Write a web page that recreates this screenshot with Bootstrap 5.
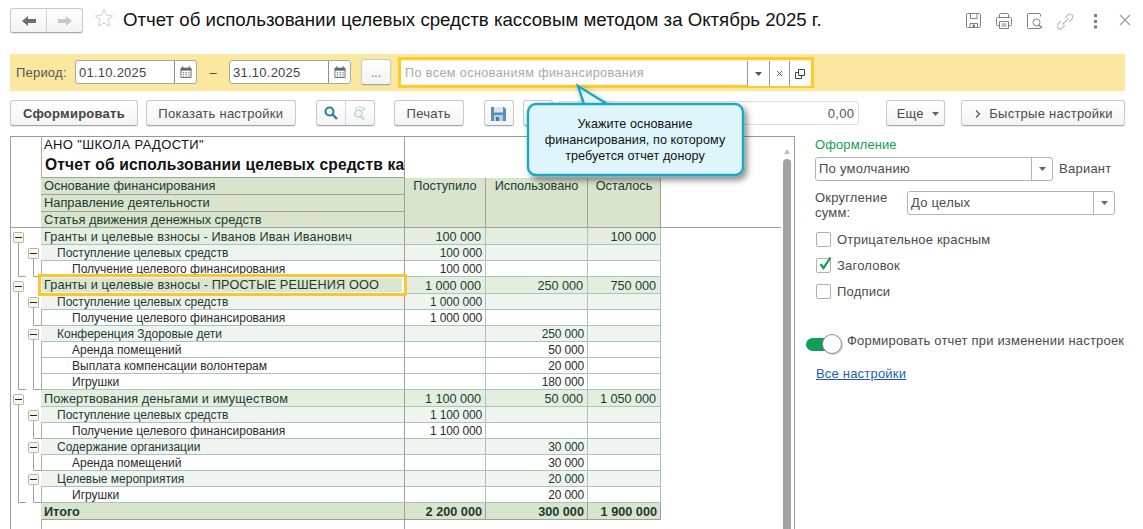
<!doctype html>
<html lang="ru">
<head>
<meta charset="utf-8">
<title>Отчет</title>
<link href="https://cdn.jsdelivr.net/npm/bootstrap@5.3.0/dist/css/bootstrap.min.css" rel="stylesheet">
<style>
html,body{height:529px;overflow:hidden;background:#fff}
body{position:relative;width:1143px;font-family:"Liberation Sans",Arial,sans-serif;font-size:13px;color:#4b4b4b;line-height:1.2}
.ui-btn{display:inline-flex;align-items:center;justify-content:center;height:26px;padding:2px 0 0;font-size:13px;color:#4b4b4b;background:linear-gradient(#fff,#f3f3f3);border:1px solid #c9c9c9;border-bottom-color:#a5a5a5;border-radius:3px;box-shadow:0 1px 1px rgba(0,0,0,.08);letter-spacing:.25px}
.hdr{height:54px;padding:8px 0 0 10px}
.nav-pair{width:73px;height:25px;padding:0}
.nav-pair span{flex:1;display:flex;align-items:center;justify-content:center;height:100%}
.nav-pair span+span{border-left:1px solid #d0d0d0}
.star-ico{margin-left:12px}
.page-title{margin:0 0 0 10px;font-size:18.67px;font-weight:400;color:#111;line-height:24px;white-space:nowrap}
.hdr-tools{position:absolute;top:13px;left:966px}
.hdr-tools svg{display:block}
.filter-bar{margin-left:10px;width:1115px;height:37px;background:#fbe8a0;padding:3px 0 0 6px}
.per-label{width:59px;color:#555;letter-spacing:.2px;line-height:32px}
.date-box{width:122px;height:24px;background:#fff;border:1px solid #a8a8a8;border-radius:3px;display:flex;margin-top:3px}
.date-box b{flex:1;font-weight:400;padding-left:3px;line-height:24px;color:#444;letter-spacing:.25px;font-size:13px}
.date-box i{width:22px;border-left:1px solid #8f8f8f;display:flex;align-items:center;justify-content:center}
.dash-sep{width:32px;text-align:center;color:#444;line-height:32px}
.more-btn{width:30px;height:26px;margin:2px 7px 0 10px;color:#666;font-size:12px;letter-spacing:0}
.basis-frame{width:416px;height:31px;border:3px solid #fdcb2e;background:#fff8dc;padding:1px;display:flex;box-sizing:border-box}
.basis-input{flex:1;background:#fff;color:#a9a9a9;padding-left:3px;line-height:25px;letter-spacing:.41px;font-size:12.6px}
.basis-act{background:#fff;border-left:1px solid #999;display:flex;align-items:center;justify-content:center;height:25px}
.w-a{width:22px}.w-b{width:20px}.w-c{width:21px}
.tool-row{margin:9px 0 0 10px;height:26px;width:1115px}
.w138{width:128px;font-weight:700;color:#454545}.w150{width:150px;margin-left:8px}
.pair-search{margin-left:20px;width:59px;padding:0}.pair-search span{flex:1;height:100%;display:flex;align-items:center;justify-content:center}
.pair-search span+span{border-left:1px solid #d6d6d6}
.w70{width:70px;margin-left:19px}.w30a{width:30px;margin-left:20px;padding:0}.w30b{width:30px;margin-left:9px}
.sum-box{width:302px;margin-left:5px;height:24px;margin-top:1px;border:1px solid #ddd;border-radius:3px;text-align:right;padding-right:4px;line-height:24px;color:#555;letter-spacing:.3px}
.w59{width:59px;margin-left:27px;padding-left:4px}.w164{width:164px;margin-left:16px;padding-left:2px}
.work-area{margin:10px 0 0 10px;height:393px}
.report-frame{width:785px;height:393px;border:1px solid #a0a0a0;border-bottom:0;position:relative;overflow:hidden;flex:none;border-top-color:#999}
.thumb{position:absolute;left:772px;top:22px;width:8px;height:380px;background:#a3a3a3;border-radius:4px 4px 0 0}
.thumb-up{position:absolute;left:773px;top:9px;width:0;height:0;border:3px solid transparent;border-bottom:5px solid #bdbdbd}
.rep-tbl{table-layout:fixed;border-collapse:separate;border-spacing:0;width:770px;color:#1c3a32}
.rep-tbl td,.rep-tbl th{padding:0;font-weight:400;overflow:hidden;white-space:nowrap;line-height:15px;vertical-align:middle}
.c1{width:30px}.c2{width:363px}.c3{width:81px}.c4{width:102px}.c5{width:73px}
.gut{vertical-align:top!important}
.gut svg{display:block}
.gut-head{border-bottom:1px solid #a0a0a0}
.rep-tbl .title-cell{height:41px;border-left:1px solid #b2aaa0;vertical-align:top;border-bottom:1px solid #a0a0a0;background:#fff;color:#111}
.org{font-size:13px;line-height:15px;padding:0 0 0 2px;letter-spacing:.36px}
.rep-name{font-size:15.6px;line-height:19px;font-weight:700;padding:3px 0 0 3px;letter-spacing:.16px}
.vl{border-left:1px solid #a0a0a0}
.rep-tbl .hd-lbl{background:#d8e4cc;height:17px;padding:0 0 1px 3px;font-size:12.85px;border-bottom:1px solid #a0a0a0}
.rep-tbl .hd-last{height:16px;padding:1px 0 0 3px;line-height:14px}
.rep-tbl .hd-num{background:#d8e4cc;vertical-align:top;text-align:center;border-bottom:1px solid #a0a0a0;border-left:1px solid #a0a0a0;font-size:12.7px;line-height:14px;padding-top:1px}
.hd-rest{border-left:1px solid #a0a0a0;border-bottom:1px solid #a0a0a0}
.r td{height:16px;border-bottom:1px solid #a9c4b8;font-size:12px;line-height:14px}
.r td:last-child{border-bottom:0;border-left:1px solid #a9c4b8}
.r .n{text-align:right;padding-right:3px;border-left:1px solid #a9c4b8;letter-spacing:-.15px}
.r .n.first{border-left-color:#a0a0a0}
.g1 td{height:17px;background:#e4eedf;font-size:12.7px;padding-top:2px}
.rep-tbl .r .gut{padding-top:0;border-bottom:0;background:#fff}
.g1 td:last-child,.g2 td:last-child,.g0 td:last-child{background:#fff}
.g1 .n{padding-right:4px;letter-spacing:-.05px}
.g1 .l{padding-left:3px;letter-spacing:.13px}
.g2 td{background:#eff4ee}
.g2 .l{padding-left:16px}
.g3 .l{padding-left:30px;border-left:1px solid #b2aaa0;color:#2b2b2b}
.g3 .n{color:#2b2b2b}
.g0 td{height:17px;background:#d8e4cc;font-size:12.7px;border-bottom:1px solid #a0a0a0;padding-top:2px}
.rep-tbl .g0 td{font-weight:700}
.g0 .l{padding-left:3px}
.g0 .n{padding-right:3px;border-left-color:#a0a0a0;letter-spacing:0}
.g0 td:last-child{border-bottom:0;border-left:1px solid #a0a0a0}
.tail-row td{height:12px}
.tail-row .l{border-left:1px solid #b2aaa0}
.side{padding:2px 0 0 20px;width:330px;color:#4b4b4b}
.side-head{color:#1a9a52;line-height:14px;margin-bottom:5px;letter-spacing:.1px}
.drop-box{height:24px;border:1px solid #b4b4b4;border-radius:3px;display:flex;background:#fff;color:#4b4b4b;letter-spacing:.25px}
.drop-box b{flex:1;font-weight:400;padding-left:3px;line-height:22px}
.drop-box i{width:21px;border-left:1px solid #b4b4b4;display:flex;align-items:center;justify-content:center}
.w238{width:238px}.w208{width:208px}
.var-lbl{margin-left:6px;letter-spacing:.25px}
.round-row{margin-top:10px}
.lbl2{width:92px;line-height:15px;letter-spacing:.2px;margin-top:-1px}
.chk-row{height:15px;margin-top:11px;gap:6px;line-height:15px;letter-spacing:.2px}
.chk-first{margin-top:12px}
.chk{width:15px;height:15px;border:1px solid #b0b0b0;border-radius:2px;background:#fff;position:relative;flex:none;margin-left:1px}
.chk svg{position:absolute;left:1px;top:-3px}
.tog-row{margin:35px 0 0 -9px;gap:5px;height:21px;line-height:14px;letter-spacing:.19px;white-space:nowrap}
.tog{width:36px;height:21px;position:relative;flex:none}
.tog::before{content:"";position:absolute;left:0;top:4px;width:30px;height:13px;border-radius:7px;background:#0f9d58}
.tog::after{content:"";position:absolute;left:16px;top:0;width:20px;height:20px;border-radius:50%;background:#fff;border:1px solid #8e8e8e;box-shadow:1px 1px 1px rgba(0,0,0,.2)}
.all-link{display:inline-block;margin:11px 0 0 1px;color:#1a5fb4;letter-spacing:.2px}
.callout{position:absolute;left:520px;top:80px;width:240px;height:108px}
.callout svg{position:absolute;left:0;top:0}
.callout p{position:absolute;left:7px;top:36px;width:216px;margin:0;text-align:center;font-size:12.6px;line-height:16px;color:#111;letter-spacing:.08px}
.hl-row{position:absolute;left:38px;top:274px;width:369px;height:22px;border:3px solid #fdc52c;background:#fff;padding:1px 2px 1px 0;color:#1c3a32;font-size:12.7px;line-height:15px;letter-spacing:.14px}
.hl-row span{display:block;height:100%;background:#dbe5cf;padding-left:2px;white-space:nowrap;border-left:1px solid #fff}
</style>
</head>
<body>
<div class="hdr d-flex align-items-start">
  <div class="ui-btn nav-pair d-flex">
    <span><svg width="16" height="12" viewBox="0 0 16 12"><path d="M7 1 1 6l6 5V8h8V4H7z" fill="#6e6e6e"/></svg></span>
    <span><svg width="16" height="12" viewBox="0 0 16 12"><path d="M9 1l6 5-6 5V8H1V4h8z" fill="#c9c9c9"/></svg></span>
  </div>
  <svg class="star-ico" width="18" height="20" viewBox="1 0 18 20"><path d="M10 1.500l2.500 5.600 6.100.6-4.600 4.100 1.300 6L10 14.700l-5.300 3.100 1.300-6-4.600-4.100 6.100-.6z" fill="none" stroke="#d8d8d8" stroke-width="1.200"/></svg>
  <h1 class="page-title">Отчет об использовании целевых средств кассовым методом за Октябрь 2025 г.</h1>
  <div class="hdr-tools d-flex">
    <svg width="30" height="16" viewBox="0 0 30 16"><g fill="none" stroke="#808080"><path d="M.5 1.500a1 1 0 0 1 1-1h12l1 1v12a1 1 0 0 1-1 1h-12a1 1 0 0 1-1-1z"/><path d="M4.500.5v5h6.500v-5M4 14.500v-4h7.500v4"/></g><rect x="6.500" y="11.500" width="2.500" height="2.500" fill="#808080"/></svg>
    <svg width="31" height="17" viewBox="0 0 31 17"><g fill="none" stroke="#808080"><path d="M3.500 4.500v-3a1 1 0 0 1 1-1h7a1 1 0 0 1 1 1v3M3 12.500H1.500a1 1 0 0 1-1-1v-6a1 1 0 0 1 1-1h13a1 1 0 0 1 1 1v6a1 1 0 0 1-1 1H13"/><path d="M3.500 8.500h9v7h-9zM5.500 11h5M5.500 13h5"/></g></svg>
    <svg width="30" height="17" viewBox="0 0 30 17"><g fill="none" stroke="#808080"><path d="M13.500 15.500h-12a1 1 0 0 1-1-1v-13a1 1 0 0 1 1-1h11a1 1 0 0 1 1 1v2"/><circle cx="9.500" cy="9.500" r="3.500"/><path d="M12 12l3 3" stroke-width="1.500"/></g></svg>
    <svg width="37" height="17" viewBox="0 0 37 17"><g fill="none" stroke="#bdbdbd" stroke-width="1.100"><path d="M8 5 11 2a2.800 2.800 0 0 1 4 4L12 9"/><path d="M8 12 5 15A2.800 2.800 0 0 1 1 11L4 8"/><path d="M5.500 11.500l6-6"/></g></svg>
    <svg width="25" height="17" viewBox="0 0 25 17"><g fill="#7d7d7d"><rect x="0" y="1" width="3" height="3"/><rect x="0" y="7" width="3" height="3"/><rect x="0" y="12.500" width="3" height="3"/></g></svg>
    <svg width="13" height="14" viewBox="0 0 13 14"><path d="M1 2l10 10M11 2 1 12" stroke="#9a9a9a" stroke-width="1.100" fill="none"/></svg>
  </div>
</div>

<div class="filter-bar d-flex align-items-start">
  <div class="per-label">Период:</div>
  <div class="date-box"><b>01.10.2025</b><i><svg width="12" height="12" viewBox="0 0 13 13"><path d="M1 2.500h11v10H1z" fill="#fff" stroke="#666"/><path d="M1 2h11v3H1z" fill="#666"/><path d="M3 0v3M10 0v3" stroke="#666"/><path d="M3 7h1.500M6 7h1.500M9 7h1.500M3 9h1.500M6 9h1.500M9 9h1.500M3 11h1.500M6 11h1.500M9 11h1.500" stroke="#777"/></svg></i></div>
  <div class="dash-sep">–</div>
  <div class="date-box"><b>31.10.2025</b><i><svg width="12" height="12" viewBox="0 0 13 13"><path d="M1 2.500h11v10H1z" fill="#fff" stroke="#666"/><path d="M1 2h11v3H1z" fill="#666"/><path d="M3 0v3M10 0v3" stroke="#666"/><path d="M3 7h1.500M6 7h1.500M9 7h1.500M3 9h1.500M6 9h1.500M9 9h1.500M3 11h1.500M6 11h1.500M9 11h1.500" stroke="#777"/></svg></i></div>
  <button type="button" class="ui-btn more-btn">...</button>
  <div class="basis-frame">
    <div class="basis-input">По всем основаниям финансирования</div>
    <div class="basis-act w-a"><svg width="7" height="4" viewBox="0 0 7 4"><path d="M0 0h7L3.500 4z" fill="#555"/></svg></div>
    <div class="basis-act w-b"><svg width="7" height="7" viewBox="0 0 7 7"><path d="M1 1l5 5M6 1 1 6" stroke="#666" fill="none"/></svg></div>
    <div class="basis-act w-c"><svg width="10" height="10" viewBox="0 0 10 10"><path d="M3.500.5h6v6h-6z M3 3.500H.5v6h6V7" fill="none" stroke="#444"/></svg></div>
  </div>
</div>

<div class="tool-row d-flex">
  <button type="button" class="ui-btn w138">Сформировать</button>
  <button type="button" class="ui-btn w150">Показать настройки</button>
  <div class="ui-btn pair-search">
    <span><svg width="14" height="14" viewBox="0 0 14 14"><circle cx="5.500" cy="5.500" r="4" fill="none" stroke="#2f7ca8" stroke-width="2"/><path d="M8.500 8.500l4.500 4.500" stroke="#2f7ca8" stroke-width="2.400"/></svg></span>
    <span><svg width="14" height="14" viewBox="0 0 14 14"><circle cx="5.500" cy="7.500" r="3.500" fill="none" stroke="#bcd3df" stroke-width="1.500"/><path d="M8 10.500l3 3" stroke="#bcd3df" stroke-width="1.800"/><path d="M2 3C5 .5 9 .5 11 3M11.500 1v3h-3" fill="none" stroke="#bcd3df"/></svg></span>
  </div>
  <button type="button" class="ui-btn w70">Печать</button>
  <button type="button" class="ui-btn w30a"><svg width="15" height="15" viewBox="0 0 15 15"><path d="M0 1h13l2 2v12H0z" fill="#5a8fb8"/><rect x="3" y="1" width="9" height="5.500" fill="#d8e6f0"/><rect x="3" y="9" width="9" height="6" fill="#b8cfdf"/><rect x="5" y="11" width="3" height="4" fill="#4a7aa0"/></svg></button>
  <button type="button" class="ui-btn w30b" aria-label="Меню"></button>
  <div class="sum-box">0,00</div>
  <button type="button" class="ui-btn w59">Еще&nbsp;<svg class="ms-1" width="7" height="4" viewBox="0 0 7 4"><path d="M0 0h7L3.500 4z" fill="#666"/></svg></button>
  <button type="button" class="ui-btn w164"><svg class="me-2" width="6" height="8" viewBox="0 0 6 8"><path d="M1 .5 4.500 4 1 7.500" fill="none" stroke="#555" stroke-width="1.200"/></svg>Быстрые настройки</button>
</div>

<div class="work-area d-flex">
  <div class="report-frame">
    <table class="rep-tbl">
      <colgroup><col class="c1"><col class="c2"><col class="c3"><col class="c4"><col class="c5"><col></colgroup>
      <tr>
        <td class="gut gut-head" rowspan="4"></td>
        <td class="title-cell"><div class="org">АНО "ШКОЛА РАДОСТИ"</div><div class="rep-name">Отчет об использовании целевых средств ка</div></td>
        <td colspan="4" class="vl"></td>
      </tr>
      <tr>
        <td class="hd-lbl">Основание финансирования</td>
        <td class="hd-num" rowspan="3">Поступило</td><td class="hd-num" rowspan="3">Использовано</td><td class="hd-num" rowspan="3">Осталось</td><td class="hd-rest" rowspan="3"></td>
      </tr>
      <tr><td class="hd-lbl">Направление деятельности</td></tr>
      <tr><td class="hd-lbl hd-last">Статья движения денежных средств</td></tr>
      <tr class="r g1"><td class="gut" rowspan="18"><svg width="30" height="292" viewBox="11 228 30 292" aria-hidden="true">
        <g fill="none" stroke="#a0a0a0">
          <path d="M18.500 240V276.500H26M18.500 289V389.500H26M18.500 402V502.500H26"/>
          <path d="M33.500 256V276.500H41M33.500 305V325.500H41M33.500 337V389.500H41M33.500 418V438.500H41M33.500 450V470.500H41M33.500 482V502.500H41"/>
        </g>
        <g fill="#f8f8ea" stroke="#b5b5a8">
          <rect x="13.500" y="232.500" width="10" height="10" rx="1"/><rect x="13.500" y="281.500" width="10" height="10" rx="1"/><rect x="13.500" y="394.500" width="10" height="10" rx="1"/>
          <rect x="28.500" y="248.500" width="10" height="10" rx="1"/><rect x="28.500" y="297.500" width="10" height="10" rx="1"/><rect x="28.500" y="329.500" width="10" height="10" rx="1"/><rect x="28.500" y="410.500" width="10" height="10" rx="1"/><rect x="28.500" y="442.500" width="10" height="10" rx="1"/><rect x="28.500" y="474.500" width="10" height="10" rx="1"/>
        </g>
        <path d="M15 237.500h7M15 286.500h7M15 399.500h7M30 253.500h7M30 302.500h7M30 334.500h7M30 415.500h7M30 447.500h7M30 479.500h7" stroke="#222"/>
      </svg></td><td class="l">Гранты и целевые взносы - Иванов Иван Иванович</td><td class="n first">100 000</td><td class="n"></td><td class="n">100 000</td><td></td></tr>
      <tr class="r g2"><td class="l">Поступление целевых средств</td><td class="n first">100 000</td><td class="n"></td><td class="n"></td><td></td></tr>
      <tr class="r g3"><td class="l">Получение целевого финансирования</td><td class="n first">100 000</td><td class="n"></td><td class="n"></td><td></td></tr>
      <tr class="r g1"><td class="l">Гранты и целевые взносы - ПРОСТЫЕ РЕШЕНИЯ ООО</td><td class="n first">1 000 000</td><td class="n">250 000</td><td class="n">750 000</td><td></td></tr>
      <tr class="r g2"><td class="l">Поступление целевых средств</td><td class="n first">1 000 000</td><td class="n"></td><td class="n"></td><td></td></tr>
      <tr class="r g3"><td class="l">Получение целевого финансирования</td><td class="n first">1 000 000</td><td class="n"></td><td class="n"></td><td></td></tr>
      <tr class="r g2"><td class="l">Конференция Здоровые дети</td><td class="n first"></td><td class="n">250 000</td><td class="n"></td><td></td></tr>
      <tr class="r g3"><td class="l">Аренда помещений</td><td class="n first"></td><td class="n">50 000</td><td class="n"></td><td></td></tr>
      <tr class="r g3"><td class="l">Выплата компенсации волонтерам</td><td class="n first"></td><td class="n">20 000</td><td class="n"></td><td></td></tr>
      <tr class="r g3"><td class="l">Игрушки</td><td class="n first"></td><td class="n">180 000</td><td class="n"></td><td></td></tr>
      <tr class="r g1"><td class="l">Пожертвования деньгами и имуществом</td><td class="n first">1 100 000</td><td class="n">50 000</td><td class="n">1 050 000</td><td></td></tr>
      <tr class="r g2"><td class="l">Поступление целевых средств</td><td class="n first">1 100 000</td><td class="n"></td><td class="n"></td><td></td></tr>
      <tr class="r g3"><td class="l">Получение целевого финансирования</td><td class="n first">1 100 000</td><td class="n"></td><td class="n"></td><td></td></tr>
      <tr class="r g2"><td class="l">Содержание организации</td><td class="n first"></td><td class="n">30 000</td><td class="n"></td><td></td></tr>
      <tr class="r g3"><td class="l">Аренда помещений</td><td class="n first"></td><td class="n">30 000</td><td class="n"></td><td></td></tr>
      <tr class="r g2"><td class="l">Целевые мероприятия</td><td class="n first"></td><td class="n">20 000</td><td class="n"></td><td></td></tr>
      <tr class="r g3"><td class="l">Игрушки</td><td class="n first"></td><td class="n">20 000</td><td class="n"></td><td></td></tr>
      <tr class="r g0"><td class="l">Итого</td><td class="n first">2 200 000</td><td class="n">300 000</td><td class="n">1 900 000</td><td></td></tr>
      <tr class="tail-row"><td></td><td class="l"></td><td class="vl"></td><td colspan="3"></td></tr>
    </table>
    <div class="thumb-up"></div>
    <div class="thumb"></div>
  </div>
  <aside class="side">
    <div class="side-head">Оформление</div>
    <div class="d-flex align-items-center">
      <div class="drop-box w238"><b>По умолчанию</b><i><svg width="7" height="4" viewBox="0 0 7 4"><path d="M0 0h7L3.500 4z" fill="#666"/></svg></i></div>
      <span class="var-lbl">Вариант</span>
    </div>
    <div class="d-flex round-row">
      <div class="lbl2">Округление сумм:</div>
      <div class="drop-box w208"><b>До целых</b><i><svg width="7" height="4" viewBox="0 0 7 4"><path d="M0 0h7L3.500 4z" fill="#666"/></svg></i></div>
    </div>
    <div class="chk-row chk-first d-flex"><span class="chk"></span>Отрицательное красным</div>
    <div class="chk-row d-flex"><span class="chk"><svg width="15" height="15" viewBox="0 0 15 15"><path d="M2.500 8l3 4L12.500 1.500" fill="none" stroke="#0f9d58" stroke-width="2.200"/></svg></span>Заголовок</div>
    <div class="chk-row d-flex"><span class="chk"></span>Подписи</div>
    <div class="tog-row d-flex"><span class="tog"></span>Формировать отчет при изменении настроек</div>
    <a class="all-link" href="#">Все настройки</a>
  </aside>
</div>

<div class="hl-row"><span>Гранты и целевые взносы - ПРОСТЫЕ РЕШЕНИЯ ООО</span></div>

<div class="callout">
  <svg width="240" height="108" viewBox="0 0 240 108"><defs><filter id="cs" x="-10%" y="-10%" width="125%" height="130%"><feDropShadow dx="3" dy="4" stdDeviation="3" flood-color="#000" flood-opacity=".45"/></filter></defs>
  <path d="M58 6 64 24H215a8 8 0 0 1 8 8V87a8 8 0 0 1-8 8H16a8 8 0 0 1-8-8V32a8 8 0 0 1 8-8h71z" fill="#def6fb" stroke="#1ea8c4" stroke-width="2.400" filter="url(#cs)"/></svg>
  <p>Укажите основание<br>финансирования, по которому<br>требуется отчет донору</p>
</div>
</body>
</html>
